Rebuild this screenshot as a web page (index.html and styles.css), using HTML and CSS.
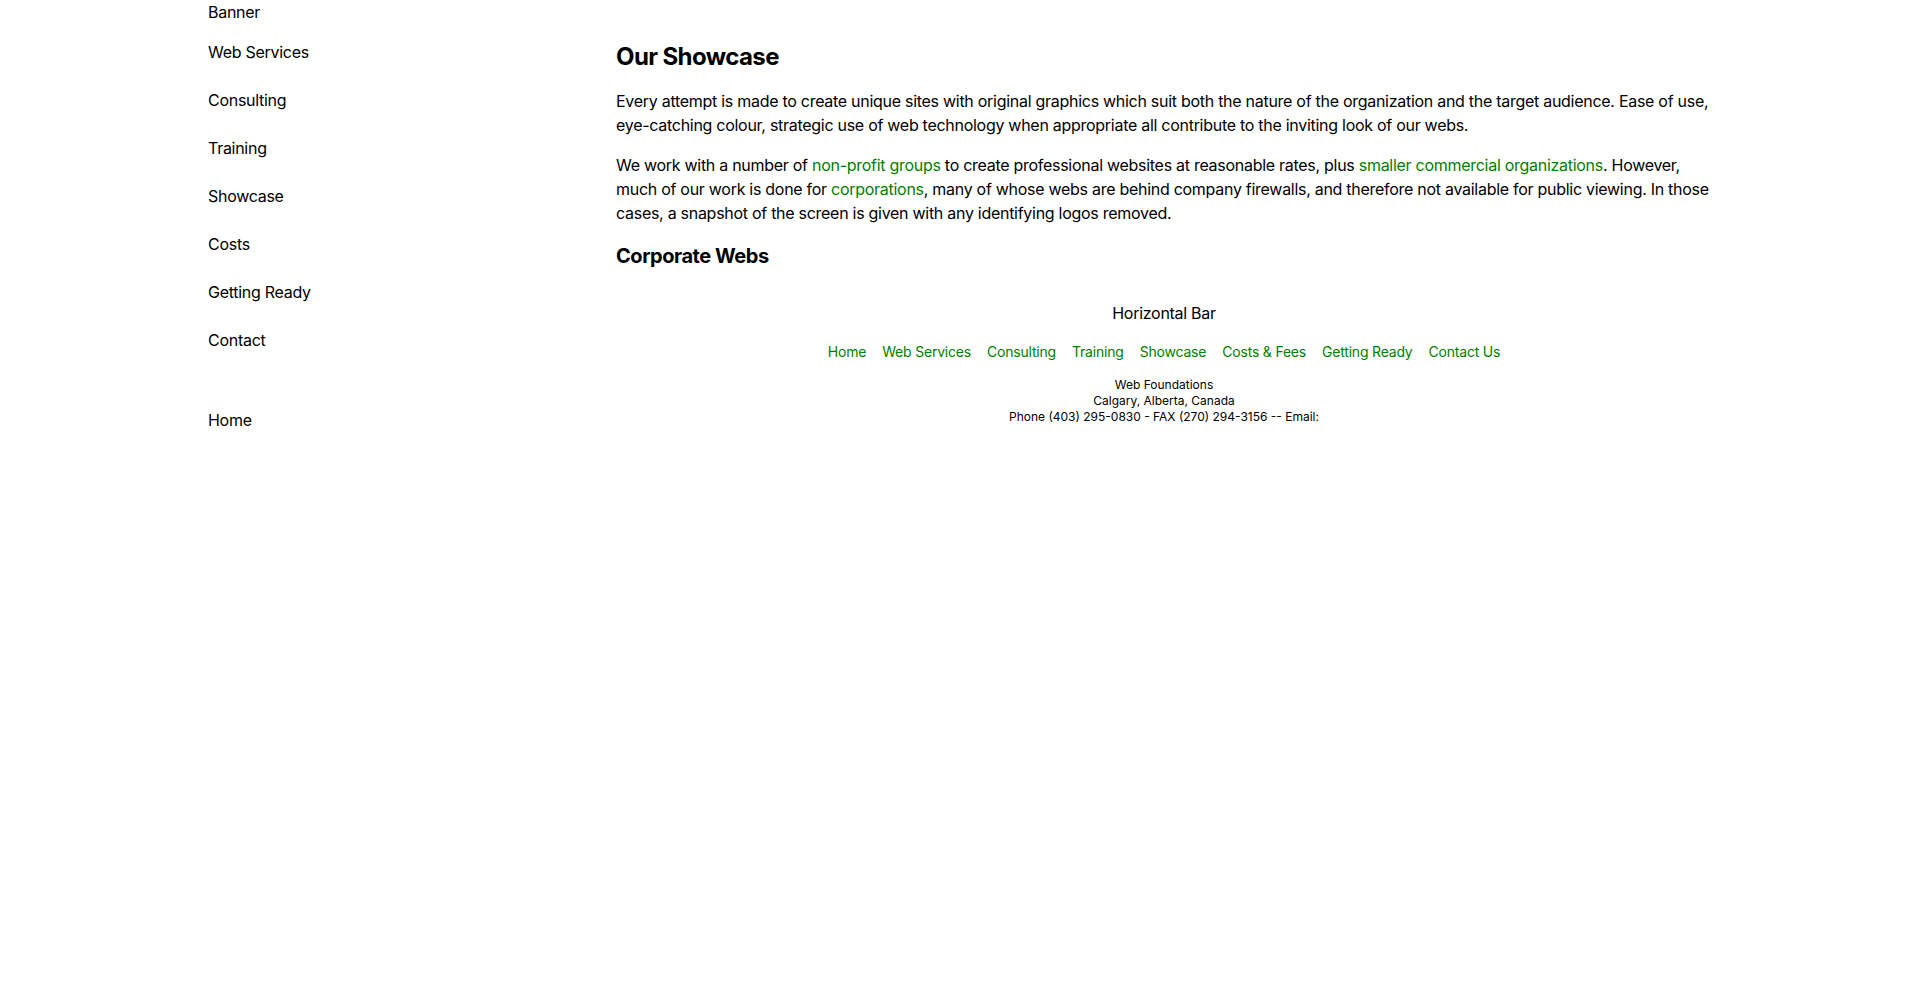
FILE: index.html
```html
<!DOCTYPE html>
<html lang="en">
<head>
<meta charset="utf-8">
<title>Our Showcase</title>
<link rel="stylesheet" href="styles.css">
</head>
<body>
<div class="page">
  <aside class="sidebar">
    <div class="banner">Banner</div>
    <ul class="side-nav">
      <li>Web Services</li>
      <li>Consulting</li>
      <li>Training</li>
      <li>Showcase</li>
      <li>Costs</li>
      <li>Getting Ready</li>
      <li>Contact</li>
    </ul>
    <ul class="side-nav side-nav-home">
      <li>Home</li>
    </ul>
  </aside>
  <main class="main">
    <h2 class="title">Our Showcase</h2>
    <p class="para">Every attempt is made to create unique sites with original graphics which suit both the nature of the organization and the target audience. Ease of use, eye-catching colour, strategic use of web technology when appropriate all contribute to the inviting look of our webs.</p>
    <p class="para">We work with a number of <a href="#" class="link">non-profit groups</a> to create professional websites at reasonable rates, plus <a href="#" class="link">smaller commercial organizations</a>. However, much of our work is done for <a href="#" class="link">corporations</a>, many of whose webs are behind company firewalls, and therefore not available for public viewing. In those cases, a snapshot of the screen is given with any identifying logos removed.</p>
    <h3 class="subtitle">Corporate Webs</h3>
    <div class="hbar">Horizontal Bar</div>
    <nav class="foot-nav">
      <a href="#" class="link">Home</a>
      <a href="#" class="link">Web Services</a>
      <a href="#" class="link">Consulting</a>
      <a href="#" class="link">Training</a>
      <a href="#" class="link">Showcase</a>
      <a href="#" class="link">Costs &amp; Fees</a>
      <a href="#" class="link">Getting Ready</a>
      <a href="#" class="link">Contact Us</a>
    </nav>
    <footer class="footer">
      <div>Web Foundations</div>
      <div>Calgary, Alberta, Canada</div>
      <div>Phone (403) 295-0830 - FAX (270) 294-3156 -- Email:</div>
    </footer>
  </main>
</div>
</body>
</html>
```

FILE: styles.css
```css
html, body {
  margin: 0;
  padding: 0;
  background: #ffffff;
}
body {
  font-family: Inter, "Liberation Sans", sans-serif;
  font-size: 16px;
  line-height: 24px;
  letter-spacing: -0.28px;
  color: #000000;
}
.page {
  max-width: 1504px;
  margin: 0 auto;
  display: flex;
}
.sidebar {
  width: 408px;
  flex: none;
}
.banner {
  line-height: 24px;
}
.side-nav {
  list-style: none;
  margin: 4px 0 0;
  padding: 0;
}
.side-nav li {
  padding: 12px 0;
  line-height: 24px;
}
.side-nav-home {
  margin-top: 32px;
}
.main {
  flex: 1;
  min-width: 0;
  padding-top: 41px;
}
.title {
  margin: 0;
  font-size: 24px;
  line-height: 32px;
  font-weight: 700;
  letter-spacing: -0.6px;
}
.para {
  margin: 16px 0 0;
}
.link {
  color: #008000;
  text-decoration: none;
}
.subtitle {
  margin: 17px 0 0;
  font-size: 20px;
  line-height: 28px;
  font-weight: 700;
  letter-spacing: -0.45px;
}
.hbar {
  margin-top: 31px;
  text-align: center;
}
.foot-nav {
  margin-top: 17px;
  display: flex;
  justify-content: center;
  gap: 16px;
  font-size: 14px;
  line-height: 20px;
  letter-spacing: -0.2px;
}
.footer {
  margin-top: 15px;
  text-align: center;
  font-size: 12px;
  line-height: 16px;
  letter-spacing: 0;
}
```
